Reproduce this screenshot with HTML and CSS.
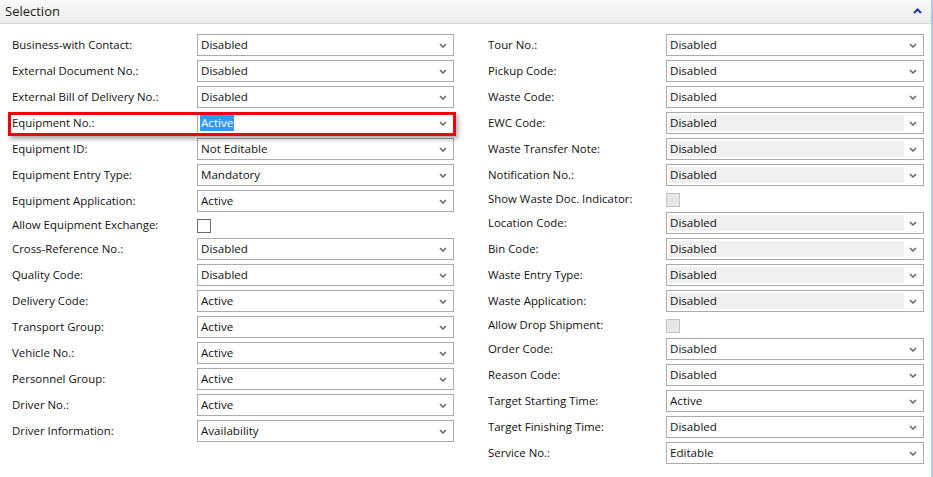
FILE: index.html
```html
<!DOCTYPE html>
<html>
<head>
<meta charset="utf-8">
<link rel="stylesheet" href="styles.css">
</head>
<body>
<div class="page">
  <div class="header">
    <span class="title">Selection</span>
    <svg class="collapse" width="9" height="6" viewBox="0 0 9 6"><path d="M1 5 L4.5 1.5 L8 5" stroke="#1c3c94" stroke-width="2" fill="none"/></svg>
  </div>
  <div class="form">
    <div class="col left">
      <div class="row"><span class="label">Business-with Contact:</span><div class="select"><span class="val">Disabled</span><svg class="arrow" width="8" height="5" viewBox="0 0 8 5"><path d="M1 1 L4 4 L7 1" stroke="#666" stroke-width="1.5" fill="none"/></svg></div></div>
      <div class="row"><span class="label">External Document No.:</span><div class="select"><span class="val">Disabled</span><svg class="arrow" width="8" height="5" viewBox="0 0 8 5"><path d="M1 1 L4 4 L7 1" stroke="#666" stroke-width="1.5" fill="none"/></svg></div></div>
      <div class="row"><span class="label">External Bill of Delivery No.:</span><div class="select"><span class="val">Disabled</span><svg class="arrow" width="8" height="5" viewBox="0 0 8 5"><path d="M1 1 L4 4 L7 1" stroke="#666" stroke-width="1.5" fill="none"/></svg></div></div>
      <div class="row marked"><span class="label">Equipment No.:</span><div class="select"><span class="val"><span class="sel">Active</span></span><svg class="arrow" width="8" height="5" viewBox="0 0 8 5"><path d="M1 1 L4 4 L7 1" stroke="#666" stroke-width="1.5" fill="none"/></svg></div><span class="mark"></span></div>
      <div class="row"><span class="label">Equipment ID:</span><div class="select"><span class="val">Not Editable</span><svg class="arrow" width="8" height="5" viewBox="0 0 8 5"><path d="M1 1 L4 4 L7 1" stroke="#666" stroke-width="1.5" fill="none"/></svg></div></div>
      <div class="row"><span class="label">Equipment Entry Type:</span><div class="select"><span class="val">Mandatory</span><svg class="arrow" width="8" height="5" viewBox="0 0 8 5"><path d="M1 1 L4 4 L7 1" stroke="#666" stroke-width="1.5" fill="none"/></svg></div></div>
      <div class="row"><span class="label">Equipment Application:</span><div class="select"><span class="val">Active</span><svg class="arrow" width="8" height="5" viewBox="0 0 8 5"><path d="M1 1 L4 4 L7 1" stroke="#666" stroke-width="1.5" fill="none"/></svg></div></div>
      <div class="row check"><span class="label">Allow Equipment Exchange:</span><span class="box"></span></div>
      <div class="row"><span class="label">Cross-Reference No.:</span><div class="select"><span class="val">Disabled</span><svg class="arrow" width="8" height="5" viewBox="0 0 8 5"><path d="M1 1 L4 4 L7 1" stroke="#666" stroke-width="1.5" fill="none"/></svg></div></div>
      <div class="row"><span class="label">Quality Code:</span><div class="select"><span class="val">Disabled</span><svg class="arrow" width="8" height="5" viewBox="0 0 8 5"><path d="M1 1 L4 4 L7 1" stroke="#666" stroke-width="1.5" fill="none"/></svg></div></div>
      <div class="row"><span class="label">Delivery Code:</span><div class="select"><span class="val">Active</span><svg class="arrow" width="8" height="5" viewBox="0 0 8 5"><path d="M1 1 L4 4 L7 1" stroke="#666" stroke-width="1.5" fill="none"/></svg></div></div>
      <div class="row"><span class="label">Transport Group:</span><div class="select"><span class="val">Active</span><svg class="arrow" width="8" height="5" viewBox="0 0 8 5"><path d="M1 1 L4 4 L7 1" stroke="#666" stroke-width="1.5" fill="none"/></svg></div></div>
      <div class="row"><span class="label">Vehicle No.:</span><div class="select"><span class="val">Active</span><svg class="arrow" width="8" height="5" viewBox="0 0 8 5"><path d="M1 1 L4 4 L7 1" stroke="#666" stroke-width="1.5" fill="none"/></svg></div></div>
      <div class="row"><span class="label">Personnel Group:</span><div class="select"><span class="val">Active</span><svg class="arrow" width="8" height="5" viewBox="0 0 8 5"><path d="M1 1 L4 4 L7 1" stroke="#666" stroke-width="1.5" fill="none"/></svg></div></div>
      <div class="row"><span class="label">Driver No.:</span><div class="select"><span class="val">Active</span><svg class="arrow" width="8" height="5" viewBox="0 0 8 5"><path d="M1 1 L4 4 L7 1" stroke="#666" stroke-width="1.5" fill="none"/></svg></div></div>
      <div class="row"><span class="label">Driver Information:</span><div class="select"><span class="val">Availability</span><svg class="arrow" width="8" height="5" viewBox="0 0 8 5"><path d="M1 1 L4 4 L7 1" stroke="#666" stroke-width="1.5" fill="none"/></svg></div></div>
    </div>
    <div class="col right">
      <div class="row"><span class="label">Tour No.:</span><div class="select"><span class="val">Disabled</span><svg class="arrow" width="8" height="5" viewBox="0 0 8 5"><path d="M1 1 L4 4 L7 1" stroke="#666" stroke-width="1.5" fill="none"/></svg></div></div>
      <div class="row"><span class="label">Pickup Code:</span><div class="select"><span class="val">Disabled</span><svg class="arrow" width="8" height="5" viewBox="0 0 8 5"><path d="M1 1 L4 4 L7 1" stroke="#666" stroke-width="1.5" fill="none"/></svg></div></div>
      <div class="row"><span class="label">Waste Code:</span><div class="select"><span class="val">Disabled</span><svg class="arrow" width="8" height="5" viewBox="0 0 8 5"><path d="M1 1 L4 4 L7 1" stroke="#666" stroke-width="1.5" fill="none"/></svg></div></div>
      <div class="row"><span class="label">EWC Code:</span><div class="select off"><span class="val">Disabled</span><svg class="arrow" width="8" height="5" viewBox="0 0 8 5"><path d="M1 1 L4 4 L7 1" stroke="#666" stroke-width="1.5" fill="none"/></svg></div></div>
      <div class="row"><span class="label">Waste Transfer Note:</span><div class="select off"><span class="val">Disabled</span><svg class="arrow" width="8" height="5" viewBox="0 0 8 5"><path d="M1 1 L4 4 L7 1" stroke="#666" stroke-width="1.5" fill="none"/></svg></div></div>
      <div class="row"><span class="label">Notification No.:</span><div class="select off"><span class="val">Disabled</span><svg class="arrow" width="8" height="5" viewBox="0 0 8 5"><path d="M1 1 L4 4 L7 1" stroke="#666" stroke-width="1.5" fill="none"/></svg></div></div>
      <div class="row check"><span class="label">Show Waste Doc. Indicator:</span><span class="box off"></span></div>
      <div class="row"><span class="label">Location Code:</span><div class="select off"><span class="val">Disabled</span><svg class="arrow" width="8" height="5" viewBox="0 0 8 5"><path d="M1 1 L4 4 L7 1" stroke="#666" stroke-width="1.5" fill="none"/></svg></div></div>
      <div class="row"><span class="label">Bin Code:</span><div class="select off"><span class="val">Disabled</span><svg class="arrow" width="8" height="5" viewBox="0 0 8 5"><path d="M1 1 L4 4 L7 1" stroke="#666" stroke-width="1.5" fill="none"/></svg></div></div>
      <div class="row"><span class="label">Waste Entry Type:</span><div class="select off"><span class="val">Disabled</span><svg class="arrow" width="8" height="5" viewBox="0 0 8 5"><path d="M1 1 L4 4 L7 1" stroke="#666" stroke-width="1.5" fill="none"/></svg></div></div>
      <div class="row"><span class="label">Waste Application:</span><div class="select off"><span class="val">Disabled</span><svg class="arrow" width="8" height="5" viewBox="0 0 8 5"><path d="M1 1 L4 4 L7 1" stroke="#666" stroke-width="1.5" fill="none"/></svg></div></div>
      <div class="row check"><span class="label">Allow Drop Shipment:</span><span class="box off"></span></div>
      <div class="row"><span class="label">Order Code:</span><div class="select"><span class="val">Disabled</span><svg class="arrow" width="8" height="5" viewBox="0 0 8 5"><path d="M1 1 L4 4 L7 1" stroke="#666" stroke-width="1.5" fill="none"/></svg></div></div>
      <div class="row"><span class="label">Reason Code:</span><div class="select"><span class="val">Disabled</span><svg class="arrow" width="8" height="5" viewBox="0 0 8 5"><path d="M1 1 L4 4 L7 1" stroke="#666" stroke-width="1.5" fill="none"/></svg></div></div>
      <div class="row"><span class="label">Target Starting Time:</span><div class="select"><span class="val">Active</span><svg class="arrow" width="8" height="5" viewBox="0 0 8 5"><path d="M1 1 L4 4 L7 1" stroke="#666" stroke-width="1.5" fill="none"/></svg></div></div>
      <div class="row"><span class="label">Target Finishing Time:</span><div class="select"><span class="val">Disabled</span><svg class="arrow" width="8" height="5" viewBox="0 0 8 5"><path d="M1 1 L4 4 L7 1" stroke="#666" stroke-width="1.5" fill="none"/></svg></div></div>
      <div class="row"><span class="label">Service No.:</span><div class="select"><span class="val">Editable</span><svg class="arrow" width="8" height="5" viewBox="0 0 8 5"><path d="M1 1 L4 4 L7 1" stroke="#666" stroke-width="1.5" fill="none"/></svg></div></div>
    </div>
  </div>
</div>
</body>
</html>
```
FILE: styles.css
```css
html, body {
  margin: 0;
  padding: 0;
  background: #ffffff;
}
body {
  font-family: "Open Sans", "Noto Sans", "Liberation Sans", sans-serif;
  font-size: 11.4px;
  color: #111;
}
.page {
  width: 931px;
  height: 477px;
  border-right: 2px solid #a9c6ec;
}
.header {
  height: 23px;
  border-bottom: 1px solid #d6d6d6;
  background: linear-gradient(#f9f9f9, #ebebeb);
  display: flex;
  align-items: center;
  justify-content: space-between;
  padding: 0 9px 0 5px;
}
.title {
  font-size: 13px;
  color: #1a1a1a;
  padding-bottom: 1px;
}
.collapse {
  display: block;
  margin-top: -2px;
}
.form {
  display: flex;
  gap: 34px;
  padding: 8px 0 0 12px;
}
.col {
  display: flex;
  flex-direction: column;
}
.left { width: 442px; }
.right { width: 436px; }
.row {
  display: flex;
  align-items: center;
  height: 26px;
}
.row.check { height: 22px; }
.label {
  flex: none;
  padding-bottom: 2px;
}
.left .label { width: 185px; }
.right .label { width: 178px; }
.select {
  flex: 1;
  height: 22px;
  box-sizing: border-box;
  border: 1px solid #ababab;
  background: #fff;
  display: flex;
  align-items: center;
  padding: 2px 0 2px 2px;
}
.val {
  flex: 1;
  align-self: stretch;
  display: flex;
  align-items: center;
  font-size: 11.6px;
  padding-left: 1px;
  padding-bottom: 1px;
}
.select.off .val { background: #f0f0f0; }
.arrow {
  flex: none;
  margin: 1px 6px 0 5px;
}
.sel {
  background: #3399ff;
  color: #fff;
  padding: 0 1px;
  margin-left: -1px;
  line-height: 16px;
}
.box {
  width: 12px;
  height: 12px;
  border: 1px solid #6a6a6a;
  background: #fff;
  margin-top: 2px;
}
.box.off {
  border-color: #c4c4c4;
  background: #e6e6e6;
}
.row.marked { position: relative; }
.mark {
  position: absolute;
  left: -4px;
  right: -2px;
  top: 2px;
  bottom: 0;
  border: 3px solid #e8060c;
  box-shadow: 2px 3px 5px rgba(0, 0, 0, 0.35);
  pointer-events: none;
}
```
